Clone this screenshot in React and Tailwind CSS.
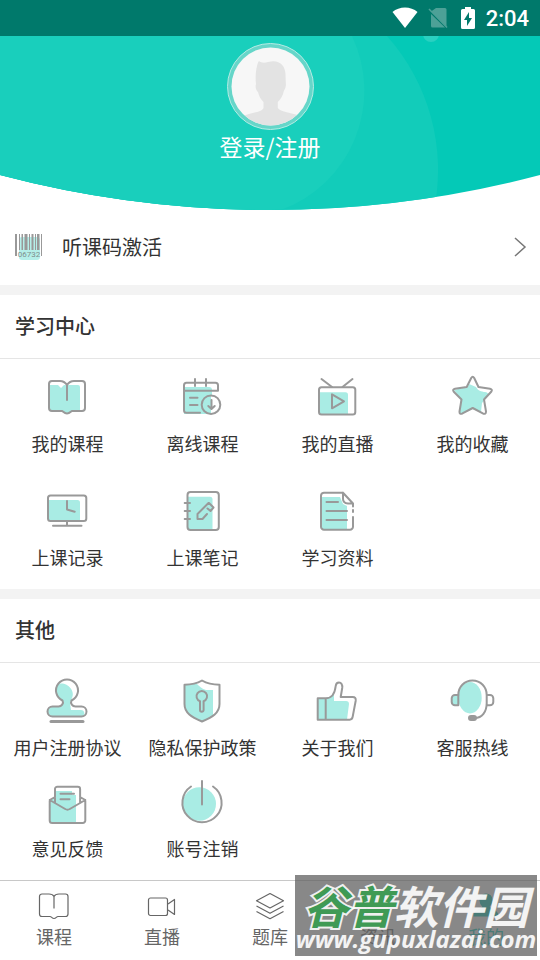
const Tint = (props) => <path fill="#a9ece4" stroke="none" {...props} />;

const icons = {
  book: (
    <>
      <Tint d="M5 10h8l3 3 3-3h14a2 2 0 0 1 2 2v24h-8c-1 0-2 2.500-5 2.500S18 36 17 36H5z" />
      <path d="M22 10v15M22 10c-2-3-4-4-7-4H7a3 3 0 0 0-3 3v24a3 3 0 0 0 3 3h10c1 0 2 2.500 5 2.500s4-2.500 5-2.500h10a3 3 0 0 0 3-3V9a3 3 0 0 0-3-3h-8c-3 0-5 1-7 4" />
    </>
  ),
  calendar: (
    <>
      <Tint d="M4 12h25a3 3 0 0 1 3 3v24H4z" />
      <circle cx="31" cy="29.700" r="9.300" fill="#fff" stroke="none" />
      <Tint d="M22 29.700a9.300 9.300 0 0 1 9-9.300V39a9.300 9.300 0 0 1-9-9.300z" />
      <path d="M20 37.700H6.500a2.500 2.500 0 0 1-2.500-2.500V10.200a2.500 2.500 0 0 1 2.500-2.500h29a2.500 2.500 0 0 1 2.500 2.500v5.500H4M15 4v7M26 4v7M10 22.700h7.500M10 30h7.500" />
      <circle cx="31" cy="29.700" r="9.300" />
      <path d="M31.500 25v8.500M28.300 31l3.200 3 3.200-3" />
    </>
  ),
  tv: (
    <>
      <Tint d="M5 17.300h25.500a2.500 2.500 0 0 1 2.500 2.500V40H5z" />
      <rect x="4" y="12.300" width="36.300" height="27.300" rx="2.500" />
      <path d="M6.500 4 17 12M37.500 4 27.500 12M17 19.300v14l12-7z" />
    </>
  ),
  star: (
    <>
      <Tint d="M19 9c-1 3-2 3-4 3.500L4 15l7 9-2 14 3 1 10.500-5 8.500 3 1-9 6-7c1-3-1-4-4-4-5-1-6-2-8-5z" />
      <path d="M21.200 3q1.500-2.500 3 0l4.300 9 11.500 1.800q3 .8 1.200 3L34 24.500l2 12q0 3-2.700 2.200L22.700 33 12 38.700q-2.700.8-2.500-2.200l2-12-7.700-7.700q-1.800-2.200 1.200-3L16.700 12z" />
    </>
  ),
  record: (
    <>
      <Tint d="M3 11h29.500a2.500 2.500 0 0 1 2.500 2.500V32H3z" />
      <rect x="3" y="6.500" width="38.300" height="25.500" rx="2.500" />
      <path d="M22 12v8.500l7.700 2.300M22 32v4.700M8 36.700h28.500" />
    </>
  ),
  notebook: (
    <>
      <Tint d="M8 7.700h22a2.500 2.500 0 0 1 2.500 2.500V41H8z" />
      <rect x="7.500" y="3" width="31.300" height="38" rx="3" />
      <path d="M4.700 14H10M4.700 22H10M4.700 30H10" />
      <path d="m29 14 4.500 4.500-3 3.500-3-2.500M28.500 14 17.500 25v5h5l4.500-5" />
    </>
  ),
  document: (
    <>
      <Tint d="M7 8h18l3 7 4 2v23H7z" />
      <path d="M28 3.700H9a3 3 0 0 0-3 3v31a3 3 0 0 0 3 3h26a3 3 0 0 0 3-3V28M38 23v-2M38 17.500v-3L28 3.700v6c0 3 2 4.500 5 4.800h5M11.500 13H23M11.500 22H32M11.500 31H32" />
    </>
  ),
  stamp: (
    <>
      <Tint d="M13 5c8-3 18 6 14 14l-2 5 1 7h10c3 0 4 3 3 6H7c-5 0-6-9 0-9h9l2-4-3-5c-5-4-5-10-2-14z" />
      <path d="M17.500 21.500a11 11 0 1 1 9 0c-1.500 3 1 6 4 6h6a5 5 0 0 1 0 10H7.500a5 5 0 0 1 0-10h6c3 0 5.500-3 4-6z" />
      <path d="M6 42.500h32" strokeWidth="3" />
    </>
  ),
  shield: (
    <>
      <Tint d="M5 6c5 0 8-1 11-2 3 3 6 6 10 7h7v25c-3 3-7 5-11 6.500C13 39 5 34 5 27z" />
      <path d="M22 1.500c-5 3-11 4.200-17.500 4.200V25c0 9 7 13 17.500 17.500C32.500 38 39.500 34 39.500 25V5.700C33 5.700 27 4.500 22 1.500z" />
      <path d="M20 22.200a5.300 5.300 0 1 1 3.600 0V31a1.800 1.800 0 0 1-3.600 0z" />
    </>
  ),
  thumb: (
    <>
      <Tint d="M3 19h8c4 0 6-2 8-5v8h12q3 0 3 3l-2 15.500H3z" />
      <path d="M10.700 19.300H2.700v21.400h32c2 0 2.700-1.200 3-3l3-16c.3-2.300-.7-3.700-3-3.700h-12l1.500-9c.5-3.500-1-5.500-3.200-5.500-2 0-3 1-3.300 3.500-.8 7-3.500 12.300-10 12.300zM10.700 19.300v21.400" />
    </>
  ),
  headset: (
    <>
      <ellipse cx="20" cy="18.700" rx="11.700" ry="15.700" fill="#a9ece4" stroke="none" />
      <path fill="#a9ece4" d="M8.300 16H5a3.300 3.300 0 0 0-3.300 3.300V23A3.300 3.300 0 0 0 5 26.300h3.300z" />
      <path d="M8.300 16c0-8 6-14.500 14.200-14.500S36.700 8 36.700 16v10.300H40a3.300 3.300 0 0 0 3.300-3.300v-3.700A3.300 3.300 0 0 0 40 16h-3.300M36.700 24c0 9-4.700 15-12 15" />
      <rect x="19" y="37" width="7" height="4" rx="2" fill="#999" />
    </>
  ),
  mail: (
    <>
      <Tint d="M10 11h17v4h4v28H5V20l5-3z" />
      <path d="M10 22.500V9a2.300 2.300 0 0 1 2.300-2.300h20.500A2.300 2.300 0 0 1 35.100 9v13.500M10 17l-5.300 3v20.500A2.500 2.500 0 0 0 7.200 43h30.600a2.500 2.500 0 0 0 2.500-2.500V20L35 17M4.700 20l15.500 9q2.300 1.300 4.600 0l15.500-9M15.500 13.700H29M15.500 19.300h9" />
    </>
  ),
  power: (
    <>
      <circle cx="19.300" cy="24" r="16.700" fill="#a9ece4" stroke="none" />
      <path d="M11 6.500a19.600 19.600 0 1 0 22 0M22 1v23.500" />
    </>
  ),
};

const studyItems = [
  { icon: "book", label: "我的课程" },
  { icon: "calendar", label: "离线课程" },
  { icon: "tv", label: "我的直播" },
  { icon: "star", label: "我的收藏" },
  { icon: "record", label: "上课记录" },
  { icon: "notebook", label: "上课笔记" },
  { icon: "document", label: "学习资料" },
];

const otherItems = [
  { icon: "stamp", label: "用户注册协议" },
  { icon: "shield", label: "隐私保护政策" },
  { icon: "thumb", label: "关于我们" },
  { icon: "headset", label: "客服热线" },
  { icon: "mail", label: "意见反馈" },
  { icon: "power", label: "账号注销" },
];

const tabs = [
  {
    label: "课程",
    icon: (
      <path d="M16 6.500v12M16 6.500C15 4.500 13.500 4 11 4H4a2.500 2.500 0 0 0-2.500 2.500V24A2.500 2.500 0 0 0 4 26.500h8c1.500 0 2 2 4 2s2.500-2 4-2h7.500A2.500 2.500 0 0 0 30 24V6.500A2.500 2.500 0 0 0 27.500 4H21c-2.500 0-4 .5-5 2.500" />
    ),
  },
  {
    label: "直播",
    icon: (
      <>
        <rect x="2.500" y="8" width="19" height="17.500" rx="2" />
        <path d="m22 14 6.500-4.500v15L22 20" />
      </>
    ),
  },
  {
    label: "题库",
    icon: (
      <path d="m16 3.500 13.500 7.200L16 18 2.500 10.700zM2.500 16 16 23.300 29.500 16M2.500 21.500 16 28.700l13.500-7.200" />
    ),
  },
  {
    label: "资讯",
    icon: <path d="M5 5h22v22H5zM9 10h8v7H9zM20 11h4M20 16h4M9 22h15" />,
  },
  {
    label: "我的",
    active: true,
    icon: (
      <path
        fill="currentColor"
        d="M16 4a6 6 0 0 1 6 6c0 3-1.500 5-3 6.500 0 3 9 3 9 9.500H4c0-6.500 9-6.500 9-9.500-1.500-1.500-3-3.500-3-6.500a6 6 0 0 1 6-6z"
      />
    ),
  },
];

const StatusBar = () => (
  <div className="flex h-9 items-center justify-end bg-[#00796b] pr-[11px] text-white">
    <svg viewBox="0 0 26 22" className="mr-2.5 h-[22px] w-[26px]" fill="currentColor">
      <path d="M.5 5C7-1 19-1 25.500 5L13 21z" />
    </svg>
    <svg viewBox="0 0 20 22" className="mr-3 h-[22px] w-5">
      <path fill="#4da197" d="M8 1h9a1.500 1.500 0 0 1 1.500 1.500v17L3 4.500zM3 7l14 13.500H4.500A1.500 1.500 0 0 1 3 19z" />
      <path stroke="#4da197" strokeWidth="1.500" d="M1 2l18 18.500" />
    </svg>
    <svg viewBox="0 0 16 22" className="mr-2.5 h-[22px] w-4" fill="currentColor">
      <path fillRule="evenodd" d="M5 0h6v2h2.500a1.500 1.500 0 0 1 1.500 1.500v17a1.500 1.500 0 0 1-1.500 1.500h-11A1.500 1.500 0 0 1 1 20.500v-17A1.500 1.500 0 0 1 2.500 2H5zM9 5l-5 8h3v6l5-8H9z" />
    </svg>
    <span className="pt-0.5 font-[Roboto,sans-serif] text-[22px] leading-8 font-medium">2:04</span>
  </div>
);

const ProfileHeader = () => (
  <header className="relative h-[174px]">
    <svg
      viewBox="0 0 540 174"
      preserveAspectRatio="none"
      className="absolute inset-0 h-full w-full"
      aria-hidden="true"
    >
      <defs>
        <clipPath id="curve">
          <path d="M0 0h540v139A1059 1059 0 0 1 0 139z" />
        </clipPath>
      </defs>
      <g clipPath="url(#curve)">
        <rect width="540" height="174" fill="#04c9b7" />
        <path fill="#12ccba" d="M0 0h387a201 201 0 0 1 47 174H0z" />
        <path fill="#19cfbc" d="M0 0h352a127 127 0 0 1-71 174H0z" />
        <circle cx="431" cy="-2" r="8" fill="#2ad0c1" />
      </g>
    </svg>
    <button type="button" className="relative mx-auto flex flex-col items-center pt-[7px] text-white">
      <svg viewBox="0 0 87 87" className="size-[87px]" aria-hidden="true">
        <defs>
          <clipPath id="avatar">
            <circle cx="43.500" cy="43.500" r="39" />
          </clipPath>
        </defs>
        <circle cx="43.500" cy="43.500" r="43" fill="#66d6c9" stroke="#b5ebe4" />
        <circle cx="43.500" cy="43.500" r="39" fill="#f7f7f7" />
        <path
          clipPath="url(#avatar)"
          fill="#e3e3e3"
          d="M32 18c2 2 6 2 9 1 10-3 17 2 17.500 12l.3 9c.5 3-.5 6-2 8-1 5-3 8-6 11v6c2 3 8 4 20 7v15H14V74c10-5 20-4 22.500-9v-6c-3-3-4.500-6-5.500-10-2-2-3-5-2-8-1-6 0-19 3-23z"
        />
      </svg>
      <span className="text-[23px] leading-8">登录/注册</span>
    </button>
  </header>
);

const BarcodeIcon = () => (
  <svg viewBox="0 0 28 28" className="size-7" aria-hidden="true">
    <rect x="4" y="4" width="21" height="23" rx="3" fill="#b5efe9" />
    <path
      fill="#999"
      d="M0 1h2v22H0zM4 1h1v16H4zM6.500 1H8v16H6.500zM9.500 1h3v16h-3zM14 1h1v16h-1zM16.500 1h2v16h-2zM20 1h1v16h-1zM22 1h2.500v16H22zM26 1h1v22h-1z"
    />
    <text x="14" y="24" textAnchor="middle" fontSize="8" fill="#7f8f8d" className="font-[Roboto,sans-serif]">
      06732
    </text>
  </svg>
);

const MenuItem = ({ icon, label }) => (
  <button type="button" className="flex flex-col items-center whitespace-nowrap">
    <svg
      viewBox="0 0 45 45"
      className="size-[45px] overflow-visible"
      fill="none"
      stroke="#999"
      strokeWidth="2"
      strokeLinecap="round"
      strokeLinejoin="round"
      aria-hidden="true"
    >
      {icons[icon]}
    </svg>
    <span className="mt-[9px] text-lg leading-7">{label}</span>
  </button>
);

const Section = ({ title, items, gridClass }) => (
  <section className="border-t-10 border-[#f3f3f3]">
    <h2 className="border-b border-[#e5e5e5] px-[15px] pt-[15px] pb-[17px] text-xl leading-[31px] font-medium">
      {title}
    </h2>
    <div className={`grid grid-cols-4 pt-4 ${gridClass}`}>
      {items.map((item) => (
        <MenuItem key={item.label} {...item} />
      ))}
    </div>
  </section>
);

const Chevron = () => (
  <svg
    viewBox="0 0 14 20"
    className="h-5 w-3.5"
    fill="none"
    stroke="#777"
    strokeWidth="1.500"
    aria-hidden="true"
  >
    <path d="m2 1 10 9-10 9" />
  </svg>
);

const Watermark = () => (
  <div className="pointer-events-none absolute right-[3px] bottom-1 flex h-[81px] w-[242px] flex-col items-center bg-[#606060]/75 whitespace-nowrap text-white/90">
    <p className="text-[45px] leading-[60px] font-bold italic">
      <span className="text-[#3f9a55] [-webkit-text-stroke:4px_#ffffffe0] [paint-order:stroke_fill]">谷普</span>
      软件园
    </p>
    <p className="-mt-3 font-['Open_Sans',sans-serif] text-2xl leading-8 font-bold italic">www.gupuxlazai.com</p>
  </div>
);

const TabBar = () => (
  <nav className="relative mt-auto grid h-20 grid-cols-5 border-t border-[#c8c8c8] bg-white">
    {tabs.map((tab) => (
      <a
        key={tab.label}
        href="#"
        className={`flex flex-col items-center pt-[9px] ${tab.active ? "text-[#04c9b7]" : "text-[#666]"}`}
      >
        <svg
          viewBox="0 0 32 32"
          className="size-8"
          fill="none"
          stroke="currentColor"
          strokeWidth="1.200"
          strokeLinejoin="round"
          aria-hidden="true"
        >
          {tab.icon}
        </svg>
        <span className="text-lg leading-7">{tab.label}</span>
      </a>
    ))}
    <Watermark />
  </nav>
);

const App = () => (
  <div className="flex min-h-screen flex-col bg-white font-['Noto_Sans_CJK_SC',sans-serif] text-[#333]">
    <StatusBar />
    <ProfileHeader />
    <button type="button" className="flex h-[75px] items-center pr-[13px] pb-px pl-[15px] text-left">
      <BarcodeIcon />
      <span className="ml-[19px] flex-1 text-xl">听课码激活</span>
      <Chevron />
    </button>
    <Section title="学习中心" items={studyItems} gridClass="gap-y-8 pb-[18px]" />
    <Section title="其他" items={otherItems} gridClass="gap-y-[19px]" />
    <TabBar />
  </div>
);

export default App;
